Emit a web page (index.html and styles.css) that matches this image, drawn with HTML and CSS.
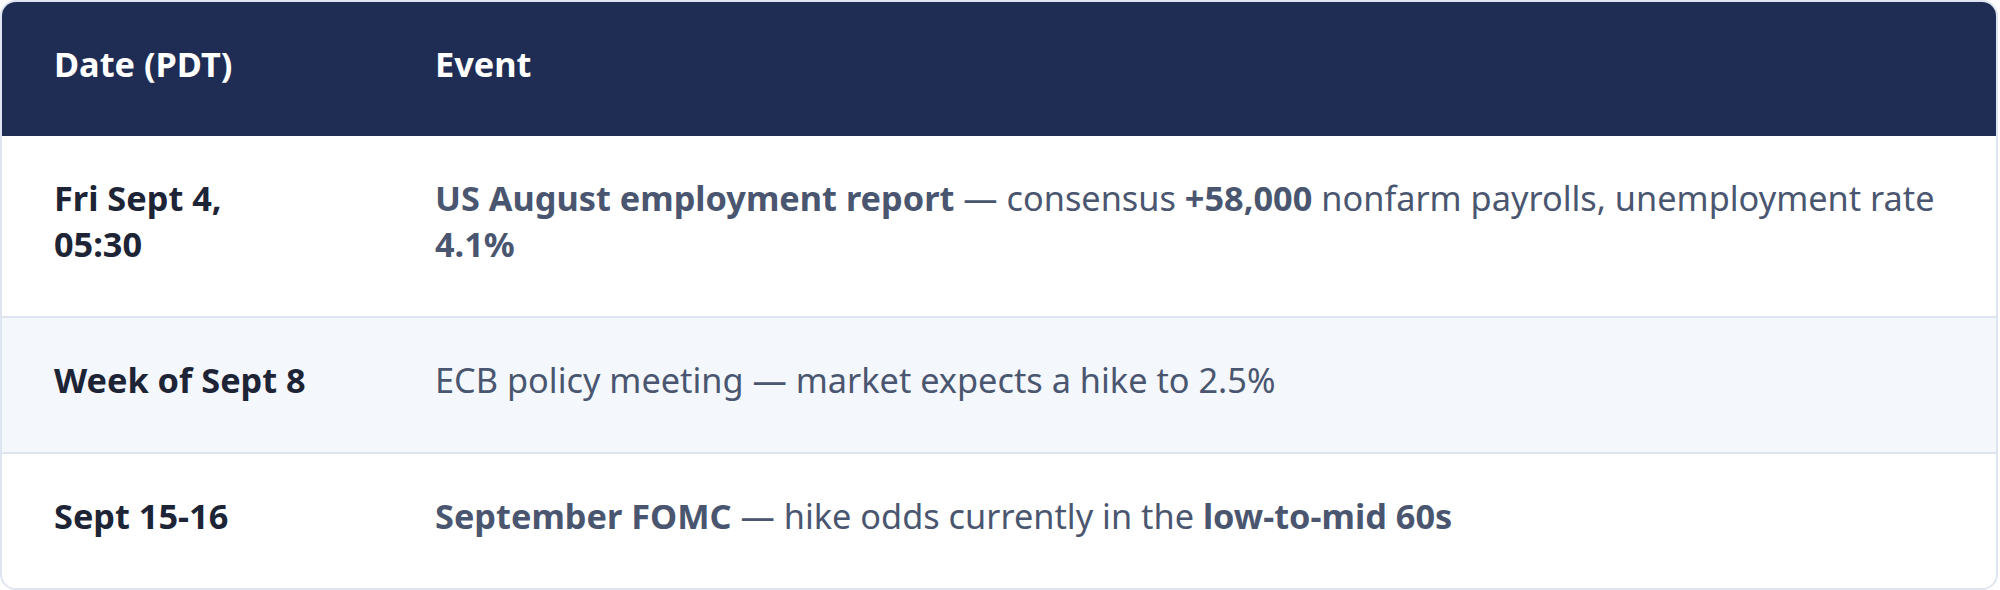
FILE: index.html
```html
<!DOCTYPE html>
<html>
<head>
<meta charset="utf-8">
<link rel="stylesheet" href="styles.css">
</head>
<body>
<div class="card">
  <div class="row head">
    <div class="date">Date (PDT)</div>
    <div class="event">Event</div>
  </div>
  <div class="row">
    <div class="date">Fri Sept 4, 05:30</div>
    <div class="event"><b>US August employment report</b> — consensus <b>+58,000</b> nonfarm payrolls, unemployment rate <b>4.1%</b></div>
  </div>
  <div class="row alt">
    <div class="date">Week of Sept 8</div>
    <div class="event">ECB policy meeting — market expects a hike to 2.5%</div>
  </div>
  <div class="row last">
    <div class="date">Sept 15-16</div>
    <div class="event"><b>September FOMC</b> — hike odds currently in the <b>low-to-mid 60s</b></div>
  </div>
</div>
</body>
</html>
```
FILE: styles.css
```css
html, body {
  margin: 0;
  padding: 0;
  background: #ffffff;
}
body {
  padding: 0;
  font-family: "Noto Sans", sans-serif;
  font-size: 34.3px;
  line-height: 46px;
}
.card {
  border: 2px solid #dfe5f0;
  border-radius: 16px;
  overflow: hidden;
  width: 1998px;
  box-sizing: border-box;
}
.row {
  display: grid;
  grid-template-columns: 433px 1fr;
  border-bottom: 2px solid #dfe5f0;
  background: #ffffff;
}
.row.last { border-bottom: none; }
.row.alt { background: #f4f7fc; }
.date {
  padding: 39px 123px 49px 52px;
  font-weight: 700;
  color: #1c2436;
}
.event {
  padding: 39px 28px 49px 0;
  color: #4a5670;
}
.event b { font-weight: 700; }
.row.head {
  background: #1f2d54;
  border-bottom: none;
}
.row.head .date, .row.head .event {
  color: #ffffff;
  font-weight: 700;
}
```
